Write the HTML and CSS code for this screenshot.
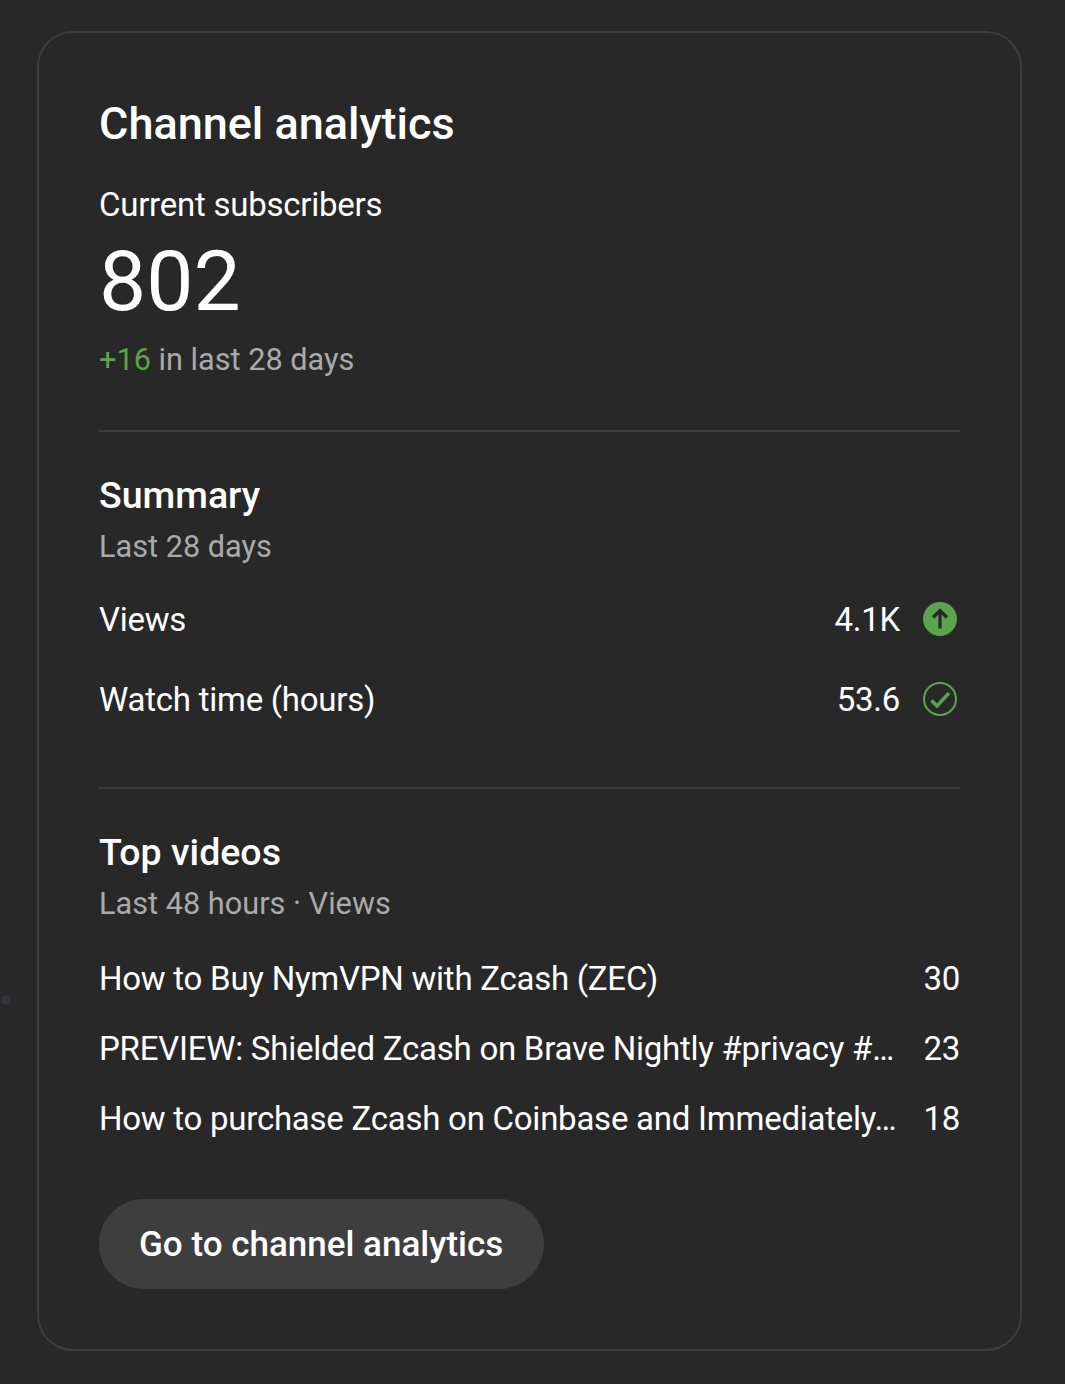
FILE: index.html
```html
<!DOCTYPE html>
<html lang="en">
<head>
    <meta charset="UTF-8">
    <meta name="viewport" content="width=device-width, initial-scale=1.0">
    <title>Channel analytics</title>
    <link rel="stylesheet" href="styles.css">
</head>
<body>
    <span class="edge-dot"></span>
    <div class="card">
        <h1 class="card-title">Channel analytics</h1>
        <div class="subs-label">Current subscribers</div>
        <div class="subs-count">802</div>
        <div class="subs-change"><span class="positive">+16</span> in last 28 days</div>

        <div class="divider divider-summary"></div>

        <h2 class="section-title">Summary</h2>
        <div class="section-sub">Last 28 days</div>
        <div class="metric metric-first">
            <span class="metric-name">Views</span>
            <span class="metric-value">4.1K</span>
            <svg class="metric-icon" viewBox="0 0 34 34">
                <circle cx="17" cy="17" r="17" fill="#5aa44c"/>
                <path d="M17 26.5V9M10 15.5L17 8.5l7 7" fill="none" stroke="#282828" stroke-width="3.2"/>
            </svg>
        </div>
        <div class="metric">
            <span class="metric-name">Watch time (hours)</span>
            <span class="metric-value">53.6</span>
            <svg class="metric-icon" viewBox="0 0 34 34">
                <circle cx="17" cy="17" r="16" fill="none" stroke="#5aa44c" stroke-width="2"/>
                <path d="M8.5 18.5L14 24l12-13" fill="none" stroke="#5aa44c" stroke-width="3.4"/>
            </svg>
        </div>

        <div class="divider divider-top"></div>

        <h2 class="section-title">Top videos</h2>
        <div class="section-sub">Last 48 hours · Views</div>
        <div class="video-list">
            <div class="video-row">
                <span class="video-name">How to Buy NymVPN with Zcash (ZEC)</span>
                <span class="video-views">30</span>
            </div>
            <div class="video-row">
                <span class="video-name">PREVIEW: Shielded Zcash on Brave Nightly #privacy #…</span>
                <span class="video-views">23</span>
            </div>
            <div class="video-row">
                <span class="video-name">How to purchase Zcash on Coinbase and Immediately…</span>
                <span class="video-views">18</span>
            </div>
        </div>

        <button class="analytics-btn">Go to channel analytics</button>
    </div>
</body>
</html>
```

FILE: styles.css
```css
html, body {
    height: 100%;
}

body {
    margin: 0;
    background-color: #282828;
    color: #fff;
    font-family: 'Roboto', 'Liberation Sans', sans-serif;
    position: relative;
    overflow: hidden;
}

.edge-dot {
    position: absolute;
    left: 1px;
    top: 995px;
    width: 10px;
    height: 10px;
    border-radius: 50%;
    background-color: #30343b;
}

.card {
    box-sizing: border-box;
    width: 985px;
    height: 1320px;
    margin: 31px 0 0 37px;
    padding: 61px 60px 0 60px;
    border: 2px solid #3e3e3e;
    border-radius: 36px;
}

.card-title {
    margin: 0;
    font-size: 45px;
    font-weight: 500;
    line-height: 60px;
}

.subs-label {
    margin-top: 31px;
    font-size: 33px;
    line-height: 40px;
    letter-spacing: -0.25px;
}

.subs-count {
    margin-top: 7px;
    font-size: 84px;
    line-height: 100px;
}

.subs-change {
    margin-top: 6px;
    font-size: 30.7px;
    line-height: 44px;
    color: #aaa;
}

.positive {
    color: #5aa44c;
}

.divider {
    height: 2px;
    background-color: #3e3e3e;
}

.divider-summary {
    margin-top: 48px;
}

.divider-top {
    margin-top: 48px;
}

.section-title {
    margin: 38px 0 0 0;
    font-size: 37.5px;
    font-weight: 500;
    line-height: 50px;
}

.section-sub {
    margin-top: 5px;
    font-size: 30.7px;
    line-height: 44px;
    color: #aaa;
}

.metric {
    display: flex;
    align-items: center;
    height: 80px;
    font-size: 33px;
    letter-spacing: -0.25px;
}

.metric-first {
    margin-top: 10px;
}

.metric-name {
    flex: 1;
}

.metric-icon {
    width: 34px;
    height: 34px;
    margin: 0 3px 0 23px;
}

.video-list {
    margin-top: 17px;
}

.video-row {
    display: flex;
    align-items: center;
    justify-content: space-between;
    height: 70px;
    font-size: 33px;
    letter-spacing: -0.25px;
}

.video-name {
    white-space: nowrap;
}

.analytics-btn {
    display: block;
    margin-top: 46px;
    height: 90px;
    padding: 0 41px 0 40px;
    border: none;
    border-radius: 45px;
    background-color: #3e3e3e;
    color: #fff;
    font-family: inherit;
    font-size: 35px;
    font-weight: 500;
}
```
